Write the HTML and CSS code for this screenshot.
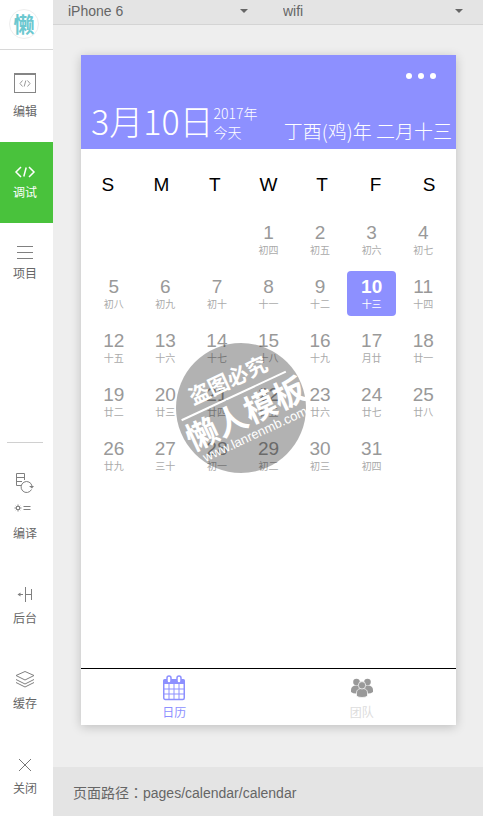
FILE: index.html
```html
<!DOCTYPE html>
<html lang="zh-CN">
  <head>
    <meta charset="UTF-8" />
    <meta name="viewport" content="width=device-width, initial-scale=1.0" />
    <title>日历</title>
    <link rel="stylesheet" href="styles.css">
  </head>
  <body>

    <!-- sidebar -->
    <aside class="sidebar">
      <div class="logo"><span>懒</span></div>

      <nav class="menu">
        <button class="menu-item">
          <svg class="icon-gap" width="24" height="24" viewBox="0 0 24 24" fill="none">
            <rect x="1.5" y="3" width="21" height="18.5" stroke="#858585" />
            <path d="M1 3h22" stroke="#858585" stroke-width="2" />
            <path d="M9.5 9.5l-2.500 3 2.500 3M14.500 9.500l2.500 3-2.500 3M12.800 9.500l-1.600 6" stroke="#999" />
          </svg>
          编辑
        </button>
        <button class="menu-item active">
          <svg width="24" height="24" viewBox="0 0 24 24" fill="none" stroke="#fff" stroke-width="1.500">
            <path d="M8 7l-5 5 5 5M16 7l5 5-5 5M13.200 7.500l-2.400 9" />
          </svg>
          调试
        </button>
        <button class="menu-item">
          <svg width="24" height="24" viewBox="0 0 24 24" stroke="#808080">
            <path d="M4 5.500h16M4 11.500h16M4 17.500h16" />
          </svg>
          项目
        </button>
      </nav>

      <nav class="menu menu-bottom">
        <button class="menu-item">
          <svg class="icon-gap" width="24" height="44" viewBox="0 0 24 44" fill="none" stroke="#808080">
            <path d="M8 14.500H3.500v-12h8V9M3.500 6.500h8M3.500 10.500H9" />
            <path d="M19 15a5.500 5.500 0 1 0-.5 3.500" />
            <path d="M16 15h5l-2 2.500z" fill="#808080" stroke="none" />
            <circle cx="5" cy="37" r="1.700" />
            <path d="M5 33.500v1.500M5 39v1.500M1.500 37H3M7 37h1.500M2.800 34.800l1 1M6.200 38.200l1 1M7.200 34.800l-1 1M3.800 38.200l-1 1M10.500 35.500h7M10.500 38.500h7" />
          </svg>
          编译
        </button>
        <button class="menu-item">
          <svg width="24" height="24" viewBox="0 0 24 24" fill="none" stroke="#808080">
            <path d="M12.500 4v15M18.500 6v11M12.500 11.500h6M5 11.500h5" />
            <path d="M4.500 11.500l3-2v4z" fill="#808080" stroke="none" />
          </svg>
          后台
        </button>
        <button class="menu-item">
          <svg width="24" height="24" viewBox="0 0 24 24" fill="none" stroke="#808080">
            <path d="M12 3.500l9 4-9 4.500-9-4.500z" />
            <path d="M3 11.500l9 4.500 9-4.500M3 14.500l9 4.500 9-4.500" />
          </svg>
          缓存
        </button>
        <button class="menu-item">
          <svg width="24" height="24" viewBox="0 0 24 24" stroke="#777">
            <path d="M6 6l12 12M18 6L6 18" />
          </svg>
          关闭
        </button>
      </nav>
    </aside>

    <div class="content">
      <div class="topbar">
        <div class="picker">
          <select aria-label="设备">
            <option>iPhone 6</option>
          </select>
        </div>
        <div class="picker">
          <select aria-label="网络">
            <option>wifi</option>
          </select>
        </div>
      </div>

      <main class="stage">
        <div class="phone">
          <header class="header">
            <button class="more" aria-label="更多"><i></i><i></i><i></i></button>
            <div class="header-row">
              <h1>3月10日</h1>
              <p class="today">2017年<br>今天</p>
              <p class="lunar">丁酉(鸡)年 二月十三</p>
            </div>
          </header>

          <div class="week">
            <span>S</span><span>M</span><span>T</span><span>W</span><span>T</span><span>F</span><span>S</span>
          </div>

          <div class="days">
            <button class="day first">1<small>初四</small></button>
            <button class="day">2<small>初五</small></button>
            <button class="day">3<small>初六</small></button>
            <button class="day">4<small>初七</small></button>

            <button class="day">5<small>初八</small></button>
            <button class="day">6<small>初九</small></button>
            <button class="day">7<small>初十</small></button>
            <button class="day">8<small>十一</small></button>
            <button class="day">9<small>十二</small></button>
            <button class="day selected">10<small>十三</small></button>
            <button class="day">11<small>十四</small></button>

            <button class="day">12<small>十五</small></button>
            <button class="day">13<small>十六</small></button>
            <button class="day">14<small>十七</small></button>
            <button class="day">15<small>十八</small></button>
            <button class="day">16<small>十九</small></button>
            <button class="day">17<small>月廿</small></button>
            <button class="day">18<small>廿一</small></button>

            <button class="day">19<small>廿二</small></button>
            <button class="day">20<small>廿三</small></button>
            <button class="day">21<small>廿四</small></button>
            <button class="day">22<small>廿五</small></button>
            <button class="day">23<small>廿六</small></button>
            <button class="day">24<small>廿七</small></button>
            <button class="day">25<small>廿八</small></button>

            <button class="day">26<small>廿九</small></button>
            <button class="day">27<small>三十</small></button>
            <button class="day">28<small>初一</small></button>
            <button class="day">29<small>初二</small></button>
            <button class="day">30<small>初三</small></button>
            <button class="day">31<small>初四</small></button>
          </div>

          <!-- watermark -->
          <svg class="watermark" width="134" height="130" viewBox="0 0 134 130">
            <circle cx="65" cy="65" r="65" fill="#000" fill-opacity="0.3" />
            <g transform="rotate(-25 65 65)" fill="#fff">
              <text class="mark-small" x="23" y="42">盗图必究</text>
              <path d="M6 51h115" stroke="#fff" stroke-width="2" />
              <text class="mark-big" x="3" y="84">懒人模板</text>
              <text class="mark-url" x="10" y="99">www.lanrenmb.com</text>
            </g>
          </svg>

          <nav class="tabs">
            <button class="tab on">
              <svg width="24" height="26" viewBox="0 0 24 26" fill="none">
                <rect x="1.750" y="5" width="20.500" height="19.500" rx="1.500" stroke="#8d90ff" stroke-width="1.500" />
                <path d="M1 9V6q0-2 2-2h18q2 0 2 2v3z" fill="#8d90ff" />
                <path d="M7 9v15M12 9v15M17 9v15M2 14h20M2 19h20" stroke="#8d90ff" />
                <rect x="5" y="1" width="4" height="7" rx="2" fill="#fff" stroke="#8d90ff" stroke-width="1.500" />
                <rect x="15" y="1" width="4" height="7" rx="2" fill="#fff" stroke="#8d90ff" stroke-width="1.500" />
              </svg>
              日历
            </button>
            <button class="tab">
              <svg width="24" height="26" viewBox="0 0 24 26" fill="#999">
                <circle cx="6.500" cy="7" r="3.300" />
                <circle cx="17.500" cy="7" r="3.300" />
                <path d="M1 17v-2c0-3 2-4.500 5-4.500h12c3 0 5 1.500 5 4.500v2q-2 1.500-5 1.500H6q-3 0-5-1.500z" />
                <g stroke="#fff" stroke-width="0.700">
                  <path d="M6.500 21V18c0-3.500 2.500-4.500 5.500-4.500s5.500 1 5.500 4.500v3q-2 1.500-5.500 1.500t-5.500-1.500z" />
                  <circle cx="12" cy="10.300" r="3.700" />
                </g>
              </svg>
              团队
            </button>
          </nav>
        </div>
      </main>

      <footer class="path" lang="zh-TW">页面路径：pages/calendar/calendar</footer>
    </div>

  </body>
</html>
```

FILE: styles.css
```css
* {
  padding: 0;
  margin: 0;
  box-sizing: border-box;
}

body {
  display: flex;
  min-height: 100vh;
  background-color: #eee;
  color: #666;
  font-family: "Liberation Sans", "Noto Sans CJK SC", sans-serif;
  font-size: 14px;
}

button,
select {
  border: none;
  background: none;
  color: inherit;
  font: inherit;
  cursor: pointer;
}

svg {
  display: block;
}

/* sidebar */
.sidebar {
  display: flex;
  flex-direction: column;
  flex: 0 0 53px;
  background-color: #fff;
}

.logo {
  height: 50px;
  padding: 9px;
  border-bottom: 1px solid #d8d8d8;
}

.logo span {
  display: block;
  width: 30px;
  height: 30px;
  border: 1px solid #eee;
  border-radius: 50%;
  color: #6cc8d0;
  font-size: 21px;
  font-weight: bold;
  line-height: 29px;
  text-align: center;
}

.menu {
  padding-top: 11px;
}

.menu-item {
  display: flex;
  flex-direction: column;
  align-items: center;
  justify-content: flex-end;
  gap: 1px;
  width: 100%;
  min-height: 81px;
  padding: 0 3px 22px 0;
  font-size: 12px;
  line-height: 16px;
}

.menu-item.active {
  background-color: #49c23c;
  color: #fff;
}

.icon-gap {
  margin-bottom: 8px;
}

.menu-bottom {
  margin-top: auto;
  padding-top: 0;
}

.menu-bottom::before {
  content: "";
  display: block;
  width: 36px;
  height: 1px;
  margin: 0 0 28px 7px;
  background-color: #d0d0d0;
}

.menu-bottom .menu-item {
  min-height: 85px;
  padding-bottom: 19px;
  gap: 4px;
}

.menu-bottom .icon-gap {
  margin-bottom: 7px;
}

/* right side */
.content {
  display: flex;
  flex-direction: column;
  flex: 1;
  min-width: 0;
}

.topbar {
  display: grid;
  grid-template-columns: 1fr 1fr;
  height: 25px;
  background-color: #e4e4e4;
  border-bottom: 1px solid #d4d4d4;
}

.picker {
  position: relative;
}

.picker::after {
  content: "";
  position: absolute;
  top: 9px;
  right: 20px;
  border: 4px solid transparent;
  border-top-color: #666;
  border-bottom: none;
  pointer-events: none;
}

.picker select {
  width: 100%;
  height: 22px;
  padding-left: 15px;
  appearance: none;
}

.stage {
  display: flex;
  flex: 1;
  padding: 30px 27px 42px 28px;
}

.phone {
  position: relative;
  display: flex;
  flex-direction: column;
  flex: 1;
  background-color: #fff;
  box-shadow: 0 2px 10px rgba(0, 0, 0, 0.2);
}

/* header */
.header {
  display: flex;
  flex-direction: column;
  justify-content: space-between;
  height: 94px;
  background-color: #8d90ff;
  color: #fff;
}

.more {
  display: flex;
  gap: 6px;
  align-self: flex-end;
  padding: 18px 20px 0 0;
}

.more i {
  width: 6px;
  height: 6px;
  border-radius: 50%;
  background-color: #fff;
}

.header-row {
  display: flex;
  align-items: flex-end;
  padding: 0 4px 7px 10px;
  font-family: "Noto Sans CJK SC", sans-serif;
  font-weight: 300;
  white-space: nowrap;
}

.header-row h1 {
  font-size: 34px;
  font-weight: 300;
  line-height: 42px;
}

.today {
  font-size: 14px;
  line-height: 19px;
}

.lunar {
  margin-left: auto;
  font-size: 19px;
  line-height: 22px;
}

/* calendar */
.week {
  display: grid;
  grid-template-columns: repeat(7, 1fr);
  padding: 24px 0 21px;
  color: #000;
  font-size: 19px;
  line-height: 23px;
  text-align: center;
}

.days {
  display: grid;
  grid-template-columns: repeat(7, 1fr);
  gap: 9px 2px;
  padding: 0 8px;
}

.day {
  height: 45px;
  border-radius: 4px;
  color: #999;
  font-size: 19px;
  line-height: 22px;
}

.day small {
  display: block;
  color: #aaa;
  font-size: 10px;
  line-height: 14px;
}

.day.first {
  grid-column-start: 4;
}

.day.selected {
  background-color: #8d90ff;
  color: #fff;
  font-weight: bold;
}

.day.selected small {
  color: #fff;
  font-weight: normal;
}

.watermark {
  position: absolute;
  top: 288px;
  left: 95px;
  overflow: visible;
  pointer-events: none;
}

.mark-small {
  font-size: 21px;
  font-weight: bold;
}

.mark-big {
  font-size: 32px;
  font-weight: bold;
}

.mark-url {
  font-size: 13px;
}

/* tab bar */
.tabs {
  display: flex;
  margin-top: auto;
  border-top: 1px solid #000;
}

.tab {
  display: flex;
  flex-direction: column;
  align-items: center;
  flex: 1;
  gap: 2px;
  padding: 6px 1px 2px 0;
  color: #ddd;
  font-size: 12px;
  line-height: 20px;
}

.tab.on {
  color: #8d90ff;
}

.path {
  padding: 15px 20px 12px;
  background-color: #e4e4e4;
  font-family: "Liberation Sans", "Noto Sans CJK TC", sans-serif;
  line-height: 22px;
}
```
